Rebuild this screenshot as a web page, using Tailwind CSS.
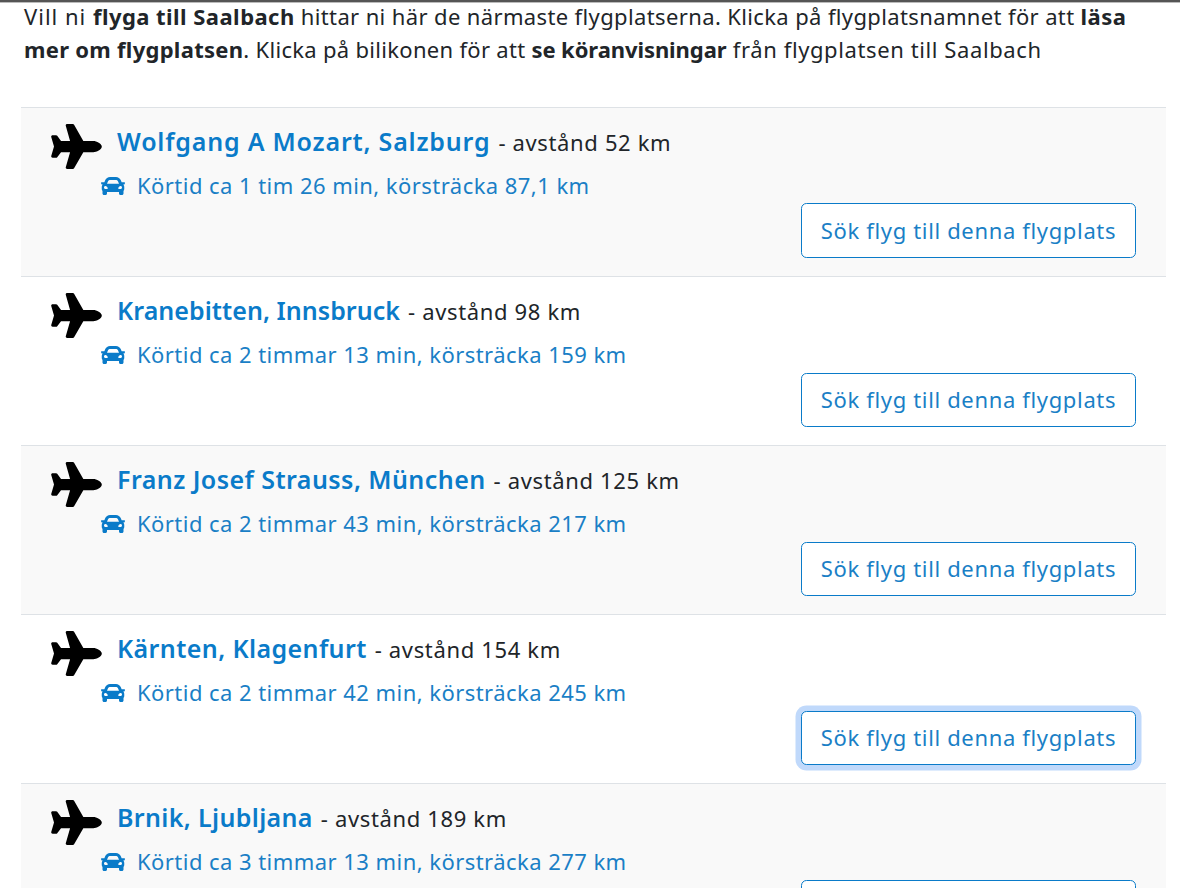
<!DOCTYPE html>
<html lang="sv">
<head>
<meta charset="UTF-8">
<title>Flyga till Saalbach</title>
<script src="https://cdn.jsdelivr.net/npm/@tailwindcss/browser@4"></script>
</head>
<body class="relative bg-white h-[888px] overflow-hidden font-['Noto_Sans',sans-serif] text-[22px] leading-[33px] text-[#212529] tracking-[0.45px]">
<!-- icons -->
<svg class="hidden">
  <symbol id="plane" viewBox="0 0 576 512"><path d="M480 192H365.71L260.61 8.06A16.014 16.014 0 0 0 246.71 0h-65.5c-10.63 0-18.3 10.17-15.38 20.39L214.86 192H112l-43.2-57.6c-3.02-4.03-7.77-6.4-12.8-6.4H16.01C5.6 128-2.04 137.78.49 147.88L32 256 .49 364.12C-2.04 374.22 5.6 384 16.01 384H56c5.04 0 9.78-2.37 12.8-6.4L112 320h102.86l-49.03 171.6c-2.92 10.22 4.75 20.4 15.38 20.4h65.5c5.74 0 11.04-3.08 13.89-8.06L365.71 320H480c35.35 0 96-28.65 96-64s-60.65-64-96-64z"/></symbol>
  <symbol id="car" viewBox="0 0 512 512"><path d="M499.99 176h-59.87l-16.64-41.6C406.38 91.63 365.57 64 319.5 64h-127c-46.06 0-86.88 27.63-103.99 70.4L71.87 176H12.01C4.2 176-1.53 183.34.37 190.91l6 24C7.7 220.25 12.5 224 18.01 224h20.07C24.65 235.73 16 252.78 16 272v48c0 16.12 6.16 30.67 16 41.93V416c0 17.67 14.33 32 32 32h32c17.67 0 32-14.33 32-32v-32h256v32c0 17.67 14.33 32 32 32h32c17.67 0 32-14.33 32-32v-54.07c9.84-11.25 16-25.8 16-41.93v-48c0-19.22-8.65-36.27-22.07-48H494c5.51 0 10.31-3.75 11.64-9.09l6-24c1.89-7.57-3.84-14.91-11.65-14.91zm-352.06-17.83c7.29-18.22 24.94-30.17 44.57-30.17h127c19.63 0 37.28 11.95 44.57 30.17L384 208H128l19.93-49.83zM96 319.8c-19.2 0-32-12.76-32-31.9S76.8 256 96 256s48 28.71 48 47.85-28.8 15.95-48 15.95zm320 0c-19.2 0-48 3.19-48-15.95S396.8 256 416 256s32 12.76 32 31.9-12.8 31.9-32 31.9z"/></symbol>
</svg>

<div class="absolute top-0 left-0 right-0 h-[3px] bg-[#555] border-b border-[#bbb]"></div>

<div class="pl-[21px] pr-[14px]">
  <p class="pl-[3px] mb-[41px]"><span class="tracking-[1px]">Vill ni </span><b class="font-bold">flyga till Saalbach</b><span class="tracking-[0.37px]"> hittar ni här de närmaste flygplatserna. Klicka på flygplatsnamnet för att </span><b class="font-bold">läsa</b><br><b class="font-bold tracking-[0.28px]">mer om flygplatsen</b><span class="tracking-[0.3px]">. Klicka på bilikonen för att </span><b class="font-bold tracking-[-0.08px]">se köranvisningar</b><span class="tracking-[0.6px]"> från flygplatsen till Saalbach</span></p>

  <!-- Wolfgang A Mozart -->
  <div class="h-[169px] border-t border-[#dee2e6] bg-[#f9f9f9] px-[30px] pt-[16px]">
    <div class="flex items-start h-[46px]">
      <svg class="w-[51px] h-[45px] mr-[15px] shrink-0"><use href="#plane"/></svg>
      <a class="-mt-[1px] text-[25px] leading-[36px] font-semibold tracking-[0.8px] text-[#0a7bc9]">Wolfgang A Mozart, Salzburg</a><span class="leading-[36px] ml-[8px] tracking-[0.65px]">- avstånd 52 km</span>
    </div>
    <div class="flex items-center h-[33px] ml-[50px] -mt-[1px] mb-[1px] text-[#1a7fc6]">
      <svg class="w-[24px] h-[24px] mr-[12px] mt-[1px] fill-[#0a7bc9]"><use href="#car"/></svg>
      <a>Körtid ca 1 tim 26 min, körsträcka 87,1 km</a>
    </div>
    <div class="flex justify-end">
      <button class="w-[335px] h-[55px] bg-white border border-[#0a7bc9] rounded-[5.5px] text-[#1a7fc6] tracking-[0.65px]">Sök flyg till denna flygplats</button>
    </div>
  </div>

  <!-- Kranebitten -->
  <div class="h-[169px] border-t border-[#dee2e6] px-[30px] pt-[16px]">
    <div class="flex items-start h-[46px]">
      <svg class="w-[51px] h-[45px] mr-[15px] shrink-0"><use href="#plane"/></svg>
      <a class="-mt-[1px] text-[25px] leading-[36px] font-semibold tracking-[0.05px] text-[#0a7bc9]">Kranebitten, Innsbruck</a><span class="leading-[36px] ml-[8px] tracking-[0.65px]">- avstånd 98 km</span>
    </div>
    <div class="flex items-center h-[33px] ml-[50px] -mt-[1px] mb-[1px] text-[#1a7fc6]">
      <svg class="w-[24px] h-[24px] mr-[12px] mt-[1px] fill-[#0a7bc9]"><use href="#car"/></svg>
      <a>Körtid ca 2 timmar 13 min, körsträcka 159 km</a>
    </div>
    <div class="flex justify-end">
      <button class="mt-[1px] w-[335px] h-[54px] pb-[2px] bg-white border border-[#0a7bc9] rounded-[5.5px] text-[#1a7fc6] tracking-[0.65px]">Sök flyg till denna flygplats</button>
    </div>
  </div>

  <!-- Franz Josef Strauss -->
  <div class="h-[169px] border-t border-[#dee2e6] bg-[#f9f9f9] px-[30px] pt-[16px]">
    <div class="flex items-start h-[46px]">
      <svg class="w-[51px] h-[45px] mr-[15px] shrink-0"><use href="#plane"/></svg>
      <a class="-mt-[1px] text-[25px] leading-[36px] font-semibold tracking-[0.45px] text-[#0a7bc9]">Franz Josef Strauss, München</a><span class="leading-[36px] ml-[8px] tracking-[0.65px]">- avstånd 125 km</span>
    </div>
    <div class="flex items-center h-[33px] ml-[50px] -mt-[1px] mb-[1px] text-[#1a7fc6]">
      <svg class="w-[24px] h-[24px] mr-[12px] mt-[1px] fill-[#0a7bc9]"><use href="#car"/></svg>
      <a>Körtid ca 2 timmar 43 min, körsträcka 217 km</a>
    </div>
    <div class="flex justify-end">
      <button class="mt-[1px] w-[335px] h-[54px] pb-[2px] bg-white border border-[#0a7bc9] rounded-[5.5px] text-[#1a7fc6] tracking-[0.65px]">Sök flyg till denna flygplats</button>
    </div>
  </div>

  <!-- Kärnten -->
  <div class="h-[169px] border-t border-[#dee2e6] px-[30px] pt-[16px]">
    <div class="flex items-start h-[46px]">
      <svg class="w-[51px] h-[45px] mr-[15px] shrink-0"><use href="#plane"/></svg>
      <a class="-mt-[1px] text-[25px] leading-[36px] font-semibold tracking-[0.4px] text-[#0a7bc9]">Kärnten, Klagenfurt</a><span class="leading-[36px] ml-[8px] tracking-[0.65px]">- avstånd 154 km</span>
    </div>
    <div class="flex items-center h-[33px] ml-[50px] -mt-[1px] mb-[1px] text-[#1a7fc6]">
      <svg class="w-[24px] h-[24px] mr-[12px] mt-[1px] fill-[#0a7bc9]"><use href="#car"/></svg>
      <a>Körtid ca 2 timmar 42 min, körsträcka 245 km</a>
    </div>
    <div class="flex justify-end">
      <button class="mt-[1px] w-[335px] h-[54px] pb-[2px] bg-white border border-[#0a7bc9] rounded-[5.5px] text-[#1a7fc6] tracking-[0.65px] ring-[5.5px] ring-[#c0d9fb]">Sök flyg till denna flygplats</button>
    </div>
  </div>

  <!-- Brnik -->
  <div class="h-[169px] border-t border-[#dee2e6] bg-[#f9f9f9] px-[30px] pt-[16px]">
    <div class="flex items-start h-[46px]">
      <svg class="w-[51px] h-[45px] mr-[15px] shrink-0"><use href="#plane"/></svg>
      <a class="-mt-[1px] text-[25px] leading-[36px] font-semibold tracking-[0.35px] text-[#0a7bc9]">Brnik, Ljubljana</a><span class="leading-[36px] ml-[8px] tracking-[0.65px]">- avstånd 189 km</span>
    </div>
    <div class="flex items-center h-[33px] ml-[50px] -mt-[1px] mb-[1px] text-[#1a7fc6]">
      <svg class="w-[24px] h-[24px] mr-[12px] mt-[1px] fill-[#0a7bc9]"><use href="#car"/></svg>
      <a>Körtid ca 3 timmar 13 min, körsträcka 277 km</a>
    </div>
    <div class="flex justify-end">
      <button class="mt-[1px] w-[335px] h-[54px] pb-[2px] bg-white border border-[#0a7bc9] rounded-[5.5px] text-[#1a7fc6] tracking-[0.65px]">Sök flyg till denna flygplats</button>
    </div>
  </div>
</div>
</body>
</html>
